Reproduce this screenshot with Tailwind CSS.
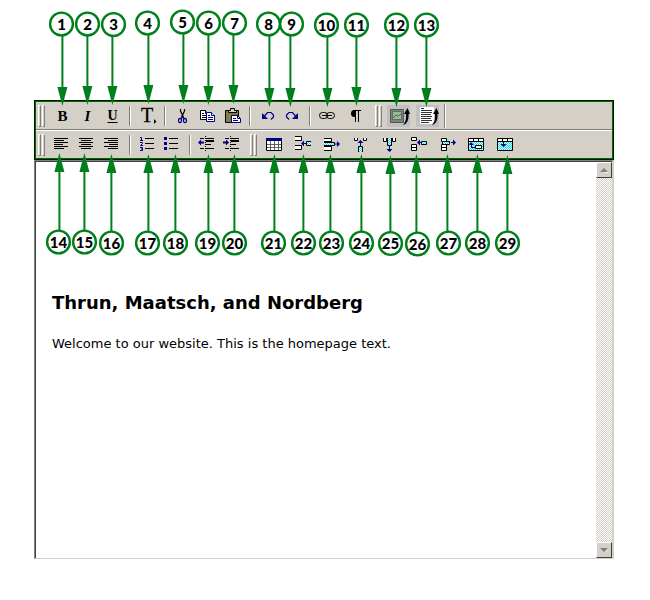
<!DOCTYPE html>
<html lang="en">
<head>
<meta charset="utf-8">
<title>Editor toolbar guide</title>
<script src="https://cdn.jsdelivr.net/npm/@tailwindcss/browser@4"></script>
</head>
<body class="bg-white text-black">
<svg class="absolute h-0 w-0" aria-hidden="true">
  <defs>
    <pattern id="dots" width="2" height="2" patternUnits="userSpaceOnUse"><path fill="#fff" d="M0 0h2v2H0z"/><path fill="#00e8f0" d="M0 0h1v1H0zM1 1h1v1H1z"/></pattern>
  </defs>
</svg>
<main class="relative flex h-screen flex-col pt-[100px] pr-9 pb-[41px] pl-[34px]">
  <div role="toolbar" aria-label="Formatting" class="border border-[#001c00] bg-[#d4d0c8]">
    <div class="border border-[#006400]">
      <div class="flex h-7 items-center border-b border-[#808080] pl-0.5">
        <span class="mr-[5px] flex gap-px"><i class="h-[22px] w-[3px] border border-t-white border-r-[#808080] border-b-[#808080] border-l-white"></i><i class="h-[22px] w-[3px] border border-t-white border-r-[#808080] border-b-[#808080] border-l-white"></i></span>
        <button aria-label="Bold" class="h-6 w-[25px] font-['Liberation_Serif',serif] text-[15px] leading-6 font-black">B</button>
        <button aria-label="Italic" class="h-6 w-[25px] font-['Liberation_Serif',serif] text-[15px] leading-6 font-black italic">I</button>
        <button aria-label="Underline" class="h-6 w-[25px] font-['Liberation_Serif',serif] text-sm leading-6 font-black underline underline-offset-2">U</button>
        <i class="mx-1 h-5 w-0.5 border-l border-[#808080] bg-white"></i>
        <button aria-label="Font"><svg class="h-6 w-[25px]" viewBox="135 104 25 24"><text x="141" y="122" font-family="Liberation Serif, serif" font-size="20" stroke="#000" stroke-width=".3">T</text><path d="M154 119v5l2.500-2.500z"/></svg></button>
        <i class="mx-1 h-5 w-0.5 border-l border-[#808080] bg-white"></i>
        <button aria-label="Cut"><svg class="h-6 w-[25px]" viewBox="170 104 25 24" fill="none"><path stroke="#000" stroke-width="1.200" d="M180.500 109v2l3 6M184.500 109v2l-3 6"/><g stroke="#000080" stroke-width="1.200"><path d="M182.500 115v2l-2 2M182.500 117l2 2"/><ellipse cx="180" cy="120.500" rx="1.500" ry="2.200"/><ellipse cx="185" cy="120.500" rx="1.500" ry="2.200"/></g></svg></button>
        <button aria-label="Copy"><svg class="h-6 w-[25px]" viewBox="195 104 25 24" fill="#fff"><path stroke="#000" d="M200.500 110.500h5l3 3v6h-8z"/><path stroke="#000" d="M205.500 110.500v3h3M202 113.500h2M202 115.500h5M202 117.500h5"/><path stroke="#000080" d="M206.500 112.500h5l3 3v6h-8z"/><path stroke="#000080" d="M211.500 112.500v3h3M208 115.500h2M208 117.500h5M208 119.500h5"/></svg></button>
        <button aria-label="Paste"><svg class="h-6 w-[25px]" viewBox="220 104 25 24"><path fill="#808040" stroke="#000" d="M225.500 110.500h13v12h-13z"/><path fill="#d4d0c8" stroke="#000" d="M228.500 112.500v-2h2v-2h4v2h2v2z"/><path fill="#fff" stroke="#000080" d="M231.500 115.500h6l3 3v4h-9z"/><path fill="none" stroke="#000080" d="M237.500 115.500v3h3M233 118.500h3M233 120.500h5"/></svg></button>
        <i class="mx-1 h-5 w-0.5 border-l border-[#808080] bg-white"></i>
        <button aria-label="Undo"><svg class="h-6 w-[25px]" viewBox="255 104 25 24"><path fill="#000080" d="M262 113v6h6z"/><path fill="none" stroke="#000080" stroke-width="1.200" d="M264.500 116l3-3.500h3.500l2.500 2.500v2l-2.500 2.500"/></svg></button>
        <button aria-label="Redo"><svg class="h-6 w-[25px]" viewBox="280 104 25 24"><path fill="#000080" d="M298 113v6h-6z"/><path fill="none" stroke="#000080" stroke-width="1.200" d="M295.500 116l-3-3.500h-3.500l-2.500 2.500v2l2.500 2.500"/></svg></button>
        <i class="mx-1 h-5 w-0.5 border-l border-[#808080] bg-white"></i>
        <button aria-label="Link"><svg class="h-6 w-[25px]" viewBox="315 104 25 24" fill="none" stroke="#000"><rect x="319.500" y="112.500" width="8" height="6" rx="3"/><rect x="326.500" y="112.500" width="8" height="6" rx="3"/><path d="M322 115.500h10"/></svg></button>
        <button aria-label="Show paragraph marks"><svg class="h-6 w-[30px]" viewBox="340 104 30 24"><path d="M361 110v1h-2v11h-1v-11h-2v11h-1v-5h-1c-2 0-3-1.500-3-3.500s1-3.500 3-3.500z"/></svg></button>
        <span class="mx-[5px] flex gap-px"><i class="h-[22px] w-[3px] border border-t-white border-r-[#808080] border-b-[#808080] border-l-white"></i><i class="h-[22px] w-[3px] border border-t-white border-r-[#808080] border-b-[#808080] border-l-white"></i></span>
        <button aria-label="Insert image" class="mr-[5px]"><svg class="h-6 w-6" viewBox="387 104 24 24"><path fill="#c0c0c0" d="M387 105h23v22h-23z"/><path fill="#808080" stroke="#505850" d="M390.500 109.500h13v13h-13z"/><path fill="#9ab89a" stroke="#587058" d="M392.500 111.500h9v8h-9z"/><path fill="none" stroke="#42664a" d="M393 118l3-3 2 1 3-2"/><path d="M403 125c4-1 6-5 5.500-11h1.500l-2.500-6-3.500 6h2c.5 5-.5 8-3 11z"/></svg></button>
        <button aria-label="Insert document"><svg class="h-6 w-6" viewBox="416 104 24 24"><path fill="#c0c0c0" d="M416 105h23v22h-23z"/><path fill="#fff" d="M420 107h14v17h-14z"/><path stroke="#000" d="M421 108.500h3M421 110.500h11M421 112.500h11M421 114.500h10M421 116.500h11M421 118.500h10M421 120.500h11M421 122.500h8" stroke-width=".8"/><path d="M432 125c4-1 6-5 5.500-11h1.500l-2.500-6-3.500 6h2c.5 5-.5 8-3 11z"/></svg></button>
        <i class="mx-1 h-6 w-0.5 border-l border-[#808080] bg-white"></i>
      </div>
      <div class="flex h-7 items-center border-t border-white pl-0.5">
        <span class="mr-[5px] flex gap-px"><i class="h-[22px] w-[3px] border border-t-white border-r-[#808080] border-b-[#808080] border-l-white"></i><i class="h-[22px] w-[3px] border border-t-white border-r-[#808080] border-b-[#808080] border-l-white"></i></span>
        <button aria-label="Align left"><svg class="h-6 w-[25px]" viewBox="50 133 25 24" stroke="#000"><path d="M54 138.500h14M54 140.500h10M54 142.500h14M54 144.500h9M54 146.500h14M54 148.500h10"/></svg></button>
        <button aria-label="Align center"><svg class="h-6 w-[25px]" viewBox="75 133 25 24" stroke="#000"><path d="M79 138.500h14M81 140.500h10M79 142.500h14M81 144.500h10M79 146.500h14M81 148.500h10"/></svg></button>
        <button aria-label="Align right"><svg class="h-6 w-[25px]" viewBox="100 133 25 24" stroke="#000"><path d="M104 138.500h14M108 140.500h10M104 142.500h14M109 144.500h9M104 146.500h14M108 148.500h10"/></svg></button>
        <i class="mx-1 h-5 w-0.5 border-l border-[#808080] bg-white"></i>
        <button aria-label="Numbered list"><svg class="h-6 w-[25px]" viewBox="135 133 25 24" fill="none"><path stroke="#000" d="M145 138.500h9M145 143.500h9M145 148.500h9"/><path stroke="#000080" d="M140 137.500h1.500v3M140 140.500h3M140 142.500h2.500v1l-2 2h2.500M140 147.500h2.500v1.500h-1.500M142.500 149v1.500h-2.500"/></svg></button>
        <button aria-label="Bulleted list"><svg class="h-6 w-[25px]" viewBox="160 133 25 24"><path stroke="#000" d="M169 138.500h9M169 143.500h9M169 148.500h9"/><path fill="#000080" d="M164 137h3v3h-3zM164 142h3v3h-3zM164 147h3v3h-3z"/></svg></button>
        <i class="mx-1 h-5 w-0.5 border-l border-[#808080] bg-white"></i>
        <button aria-label="Decrease indent"><svg class="h-6 w-[25px]" viewBox="195 133 25 24"><path stroke="#000" d="M200 138.500h4M206 138.500h8M206 144.500h5M200 148.500h4M206 148.500h8"/><path d="M206 140h8v2h-8z"/><path stroke="#000" stroke-dasharray="1 1" d="M205.500 136v15"/><path fill="#000080" d="M198 142.500l3-3v2h3v2h-3v2z"/></svg></button>
        <button aria-label="Increase indent"><svg class="h-6 w-[25px]" viewBox="220 133 25 24"><path stroke="#000" d="M225 138.500h4M231 138.500h8M231 144.500h5M225 148.500h4M231 148.500h8"/><path d="M231 140h8v2h-8z"/><path stroke="#000" stroke-dasharray="1 1" d="M230.500 136v15"/><path fill="#000080" d="M229 142.500l-3-3v2h-3v2h3v2z"/></svg></button>
        <span class="mr-[3px] ml-[5px] flex gap-px"><i class="h-[22px] w-[3px] border border-t-white border-r-[#808080] border-b-[#808080] border-l-white"></i><i class="h-[22px] w-[3px] border border-t-white border-r-[#808080] border-b-[#808080] border-l-white"></i></span>
        <button aria-label="Insert table"><svg class="h-6 w-[29px]" viewBox="260 133 29 24"><path fill="#fff" stroke="#000" d="M266.500 138.500h15v12h-15z"/><path fill="#000080" d="M266 138h16v3H266z"/><path stroke="#404040" d="M270.500 141v9M274.500 141v9M278.500 141v9M267 144.500h14M267 147.500h14" stroke-width=".8"/></svg></button>
        <button aria-label="Insert row"><svg class="h-6 w-[29px]" viewBox="289 133 29 24"><path fill="#fff" stroke="#000" d="M295 136.500h6.500v4h-6.500M295 145.500h6.500v4h-6.500"/><path fill="url(#dots)" stroke="#000" d="M311 141.500h-4.500v4h4.500"/><path fill="#000080" d="M301 143.500l3-3v2.500h3v1h-3v2.500z"/></svg></button>
        <button aria-label="Delete row"><svg class="h-6 w-[29px]" viewBox="318 133 29 24"><path fill="#fff" stroke="#000" d="M324 138.500h7.500v3h-7.500M324 146.500h7.500v4h-7.500"/><path fill="url(#dots)" stroke="#000" d="M324 142.500h10.500v3h-10.500"/><path fill="#000080" d="M340 144l-3-3v2.500h-3v1h3v2.500z"/></svg></button>
        <button aria-label="Insert column"><svg class="h-6 w-[29px]" viewBox="347 133 29 24"><path fill="#fff" stroke="#000" d="M354.500 138v2.500h3v-2.500M363.500 138v2.500h3v-2.500"/><path fill="url(#dots)" stroke="#000" d="M358.500 152v-5.500h4v5.500"/><path fill="#000080" d="M360.500 140l3 3h-2.500v3h-1v-3h-2.500z"/></svg></button>
        <button aria-label="Delete column"><svg class="h-6 w-[29px]" viewBox="376 133 29 24"><path fill="#fff" stroke="#000" d="M383.500 138v3.500h3v-3.500M392.500 138v3.500h3v-3.500"/><path fill="url(#dots)" stroke="#000" d="M387.500 138v7.500h4v-7.500"/><path fill="#000080" d="M389.500 152l3-3h-2.500v-3h-1v3h-2.500z"/></svg></button>
        <button aria-label="Insert cell"><svg class="h-6 w-[29px]" viewBox="405 133 29 24"><path fill="#fff" stroke="#000" d="M411.500 137.500h5v3h-5zM411.500 144.500h5v6h-5zM411.500 147.500h5"/><path fill="url(#dots)" stroke="#000" d="M421.500 141.500h5v3h-5z"/><path fill="#000080" d="M417 142.500l3-3v2.500h2v1h-2v2.500z"/></svg></button>
        <button aria-label="Delete cell"><svg class="h-6 w-[29px]" viewBox="434 133 29 24"><path fill="#fff" stroke="#000" d="M441.500 138.500h5v3h-5zM441.500 144.500h5v6h-5zM441.500 147.500h5"/><path fill="url(#dots)" stroke="#000" d="M442.500 141.500h7v3h-7z"/><path fill="#000080" d="M456 142.500l-3-3v2.500h-2v1h2v2.500z"/></svg></button>
        <button aria-label="Split cell"><svg class="h-6 w-[29px]" viewBox="463 133 29 24"><path fill="url(#dots)" stroke="#000" d="M468.500 138.500h15v12h-15z"/><path fill="#fff" stroke="#000" d="M468.500 138.500h15v3h-15zM473.500 138v3M478.500 138v3M475.500 145.500h6v3h-6z"/><path fill="#000080" d="M471 142l3 3h-2v2h3v1h-4v-3h-2z"/></svg></button>
        <button aria-label="Merge cells"><svg class="h-6 w-[29px]" viewBox="492 133 29 24"><path fill="url(#dots)" stroke="#000" d="M497.500 138.500h15v12h-15z"/><path fill="#fff" stroke="#000" d="M497.500 138.500h15v3h-15zM502.500 138v3M507.500 138v3"/><path fill="#000080" d="M503.500 147l3-3h-2.500v-2h-1v2h-2.500z"/></svg></button>
      </div>
    </div>
  </div>
  <section aria-label="Page content" class="flex min-h-[200px] flex-1 border border-r-2 border-t-[#808080] border-r-[#d4d0c8] border-b-[#d4d0c8] border-l-[#808080]">
    <div contenteditable="true" class="flex-1 border-t border-l border-[#404040] px-4 pt-[129px] outline-none">
      <h1 class="font-[Verdana,'DejaVu_Sans',sans-serif] text-lg leading-6 font-bold">Thrun, Maatsch, and Nordberg</h1>
      <p class="mt-[19px] font-[Verdana,'DejaVu_Sans',sans-serif] text-[13px] leading-5">Welcome to our website. This is the homepage text.</p>
    </div>
    <div class="flex w-4 flex-col justify-between border-t border-[#404040] bg-[conic-gradient(#d4d0c8_25%,#fff_0_50%,#d4d0c8_0_75%,#fff_0)] bg-[length:2px_2px]">
      <button aria-label="Scroll up" class="flex h-4 w-4 items-center justify-center border border-t-white border-r-[#404040] border-b-[#404040] border-l-white bg-[#d4d0c8]"><svg class="h-2 w-2" viewBox="0 0 8 8"><path fill="#fff" d="M1 7h7V6z"/><path fill="#808080" d="M0 6h8L4 2z"/></svg></button>
      <button aria-label="Scroll down" class="flex h-4 w-4 items-center justify-center border border-t-white border-r-[#404040] border-b-[#404040] border-l-white bg-[#d4d0c8]"><svg class="h-2 w-2" viewBox="0 0 8 8"><path fill="#fff" d="M5 7l3-4v1z"/><path fill="#808080" d="M0 2h8L4 6z"/></svg></button>
    </div>
  </section>
  <svg id="callouts" class="pointer-events-none absolute top-0 left-0 h-[270px] w-[650px]" viewBox="0 0 650 270" aria-label="Numbered callouts"></svg>
</main>
<script>
  // number, circle centre x, circle centre y, arrow x, arrow tip y
  const callouts = [
    [1,61.5,24,62,106],[2,87.5,24,87,105],[3,113.5,24.5,112,105],[4,147.5,23,148,104],
    [5,182.5,22,183,104],[6,208.5,23,208,105],[7,234.5,23,233,104],[8,268.5,24,269,107],
    [9,291.5,24,290,107],[10,326.5,25,327,107],[11,356.5,25,356,106],[12,396.5,25,396,107],
    [13,426.5,25,426,107],[14,58.5,242,59,153],[15,84.5,242,84,153],[16,111.5,243,111,154],
    [17,147.5,243,148,154],[18,175.5,243,175,154],[19,207.5,243,208,154],[20,234.5,243,234,154],
    [21,273.5,243,274,154],[22,303.5,243,303,154],[23,331.5,243,330,154],[24,361.5,243,361,154],
    [25,390.5,243.5,390,155],[26,417.5,244,416,154],[27,448.5,243,447,154],[28,477.5,243,477,154],
    [29,507.5,243,507,155]
  ];
  document.getElementById("callouts").innerHTML = callouts.map(([n, cx, cy, x, tip]) => {
    const dir = tip > cy ? 1 : -1;
    const base = tip - dir * 19, mid = x + 0.4;
    return `<path stroke="#00801c" stroke-width="2" d="M${mid} ${cy + dir * 11}V${base}"/>
      <path fill="#00801c" d="M${mid - 5} ${base}h10L${mid} ${tip}z"/>
      <circle cx="${cx}" cy="${cy}" r="11.4" fill="#fff" stroke="#00801c" stroke-width="2.4"/>
      <text x="${cx}" y="${cy + 5.5}" text-anchor="middle" font-family="Lato, sans-serif" font-weight="900" font-size="15">${n}</text>`;
  }).join("");
</script>
</body>
</html>
